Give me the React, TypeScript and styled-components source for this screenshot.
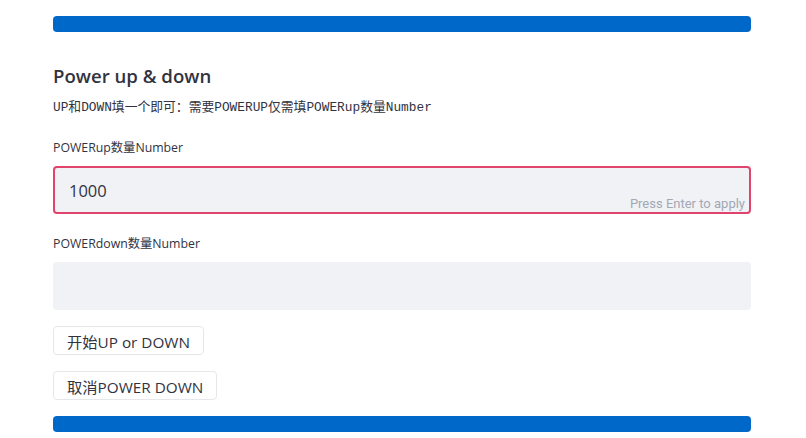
import styled, { createGlobalStyle } from 'styled-components'

const GlobalStyle = createGlobalStyle`
	html, body {
		margin: 0;
		padding: 0;
		background: #ffffff;
	}
	body {
		font-family: 'Open Sans', 'Noto Sans', 'Noto Sans CJK SC', sans-serif;
		color: #31333f;
	}
`

const fields = [
	{ label: 'POWERup数量Number', value: '1000', focused: true },
	{ label: 'POWERdown数量Number', value: '', focused: false },
]

const buttons = ['开始UP or DOWN', '取消POWER DOWN']

export default function App() {
	return (
		<>
			<GlobalStyle />
			<Page>
				<Bar />
				<Heading>Power up &amp; down</Heading>
				<Note>UP和DOWN填一个即可：需要POWERUP仅需填POWERup数量Number</Note>
				{fields.map((f, i) => (
					<Field key={f.label} $first={i === 0}>
						<Label>{f.label}</Label>
						<InputBox $focused={f.focused}>
							<Input defaultValue={f.value} />
							{f.focused && <Hint>Press Enter to apply</Hint>}
						</InputBox>
					</Field>
				))}
				<ButtonStack>
					{buttons.map(b => (
						<Button key={b}>{b}</Button>
					))}
				</ButtonStack>
				<Bar />
			</Page>
		</>
	)
}

const Page = styled.div`
	width: 698px;
	margin: 0 0 0 53px;
	padding-top: 16px;
	display: flex;
	flex-direction: column;
`

const Bar = styled.div`
	height: 16px;
	border-radius: 4px;
	background-color: #0068c9;
`

const Heading = styled.h2`
	margin: 31px 0 0;
	font-family: 'Open Sans', 'Noto Sans', sans-serif;
	font-weight: 600;
	font-size: 18.6px;
	line-height: 26px;
	color: #31333f;
`

const Note = styled.p`
	margin: 10px 0 0;
	font-family: 'Liberation Mono', 'DejaVu Sans Mono', 'Noto Sans CJK SC', monospace;
	font-size: 12.8px;
	line-height: 18px;
	color: #31333f;
`

const Field = styled.div<{ $first: boolean }>`
	margin-top: ${p => (p.$first ? '23px' : '22px')};
	display: flex;
	flex-direction: column;
`

const Label = styled.label`
	font-size: 12.3px;
	line-height: 16px;
	height: 18px;
	color: #31333f;
	margin-bottom: 8px;
`

const InputBox = styled.div<{ $focused: boolean }>`
	position: relative;
	height: 48px;
	box-sizing: border-box;
	border-radius: 4px;
	background: #f0f2f6;
	border: 2px solid ${p => (p.$focused ? '#e0446d' : '#f0f2f6')};
`

const Input = styled.input`
	width: 100%;
	height: 100%;
	box-sizing: border-box;
	border: none;
	outline: none;
	background: transparent;
	padding: 0 14px;
	font-family: 'Open Sans', 'Noto Sans', sans-serif;
	font-size: 16.5px;
	color: #31333f;
`

const Hint = styled.span`
	position: absolute;
	right: 4px;
	bottom: 1px;
	font-family: Roboto, 'Open Sans', sans-serif;
	font-size: 13px;
	color: #a3a8b4;
`

const ButtonStack = styled.div`
	margin: 16px 0;
	display: flex;
	flex-direction: column;
	align-items: flex-start;
	gap: 16px;
`

const Button = styled.button`
	height: 29px;
	padding: 0 13px;
	border: 1px solid #e6e7eb;
	border-radius: 4px;
	background: #ffffff;
	font-family: 'Open Sans', 'Noto Sans', 'Noto Sans CJK SC', sans-serif;
	font-size: 15.3px;
	color: #31333f;
	cursor: pointer;
`
